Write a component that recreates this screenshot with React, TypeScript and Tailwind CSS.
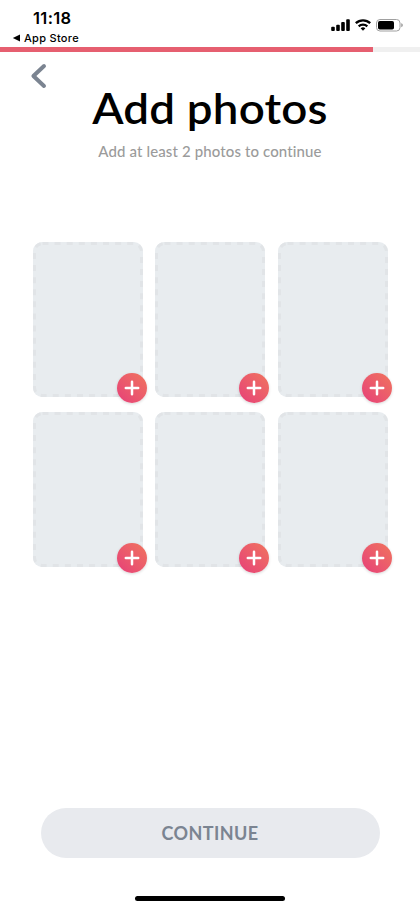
import { useState } from 'react';

const SLOT_COUNT = 6;

function StatusBar() {
  return (
    <header className="h-[47px] flex justify-between font-['Inter',sans-serif] text-black">
      <div className="pl-3 pt-[9px]">
        <p className="pl-[21px] text-[16.5px] leading-[19px] font-semibold tracking-[0.35px]">11:18</p>
        <button className="flex items-center gap-[3px] mt-[3px] text-[11px] leading-[14px] font-medium tracking-[0.3px]">
          <svg width="9" height="8" viewBox="0 0 9 8">
            <path d="M0.8 4 8 0.6v6.8z" fill="currentColor" />
          </svg>
          App Store
        </button>
      </div>
      <div className="flex items-start pt-[18px] pr-[17px]">
        <svg width="72" height="15" viewBox="0 0 72 15">
          <rect x="0.2" y="8.8" width="3.6" height="4.2" rx="0.9" />
          <rect x="5.2" y="6.8" width="3.6" height="6.2" rx="0.9" />
          <rect x="10.2" y="4" width="3.6" height="9" rx="0.9" />
          <rect x="15.2" y="1.2" width="3.6" height="11.8" rx="0.9" />
          <g fill="none" stroke="black" strokeWidth="2.3">
            <path d="M24.8 5.2a10.4 10.4 0 0 1 14.4 0" />
            <path d="M27.7 8.3a6.2 6.2 0 0 1 8.6 0" />
          </g>
          <path d="M29.6 10.3a3.5 3.5 0 0 1 4.8 0L32 12.8z" />
          <rect x="45.5" y="1.5" width="23.5" height="11.5" rx="3.5" fill="none" stroke="#a0a0a0" strokeWidth="1" />
          <rect x="47" y="3" width="16" height="8.5" rx="1.8" />
          <path d="M70.2 5.3c2.2.7 2.2 3.2 0 3.9z" fill="#a0a0a0" />
        </svg>
      </div>
    </header>
  );
}

function PhotoSlot({ index, onAdd }: { index: number; onAdd: (index: number) => void }) {
  return (
    <div className="relative h-[155px] rounded-[9px] bg-[#e8ecef]">
      <svg className="block w-full h-full" viewBox="0 0 110 155" fill="none">
        <rect x="1.5" y="1.5" width="107" height="152" rx="8" stroke="#e1e4e7" strokeWidth="3" strokeDasharray="6 6.1" />
      </svg>
      <button
        aria-label="Add photo"
        onClick={() => onAdd(index)}
        className="absolute -right-[4px] -bottom-[6px] w-[30px] h-[30px] rounded-full bg-linear-to-tr from-[#e63d78] to-[#f0735c] shadow-[0_1px_3px_rgba(0,0,0,0.16)] flex items-center justify-center"
      >
        <svg width="16" height="16" viewBox="0 0 16 16" stroke="white" strokeWidth="2.5" strokeLinecap="round">
          <path d="M8 1.8v12.4M1.8 8h12.4" />
        </svg>
      </button>
    </div>
  );
}

export default function App() {
  const [selected, setSelected] = useState<number | null>(null);

  return (
    <div className="h-[909px] bg-white flex flex-col font-['Lato',sans-serif]" data-slot={selected}>
      <StatusBar />

      <div className="h-[5px] bg-[#f0f0f0]">
        <div className="h-full w-[373px] bg-[#e65f70]" />
      </div>

      <button aria-label="Back" className="ml-[30px] mt-[11px] w-[18px] h-[26px]">
        <svg width="18" height="26" viewBox="0 0 18 26" fill="none">
          <path d="M14 3 3.4 13 14 23" stroke="#7b8491" strokeWidth="4" strokeLinecap="round" strokeLinejoin="round" />
        </svg>
      </button>

      <div className="text-center">
        <h1 className="text-[42.5px] leading-[50px] -mt-[6px] font-semibold tracking-[0.2px] scale-x-[1.075] text-black whitespace-nowrap">Add photos</h1>
        <p className="mt-[8px] text-[15px] leading-[20px] font-medium text-[#9b9b9b] tracking-[0.12px]">
          Add at least 2 photos to continue
        </p>
      </div>

      <main className="grid grid-cols-3 gap-x-[12.5px] gap-y-[14.5px] pl-[32.8px] pr-[32.2px] mt-[81px]">
        {Array.from({ length: SLOT_COUNT }, (_, i) => (
          <PhotoSlot key={i} index={i} onAdd={setSelected} />
        ))}
      </main>

      <footer className="mt-auto flex flex-col items-center">
        <button className="w-[339px] h-[50px] rounded-full bg-[#e8eaee] text-[#7b8491] text-[18px] font-bold tracking-[0.4px]">
          CONTINUE
        </button>
        <div className="mt-[38px] mb-2 h-[5px] w-[150px] rounded-full bg-black" />
      </footer>
    </div>
  );
}
